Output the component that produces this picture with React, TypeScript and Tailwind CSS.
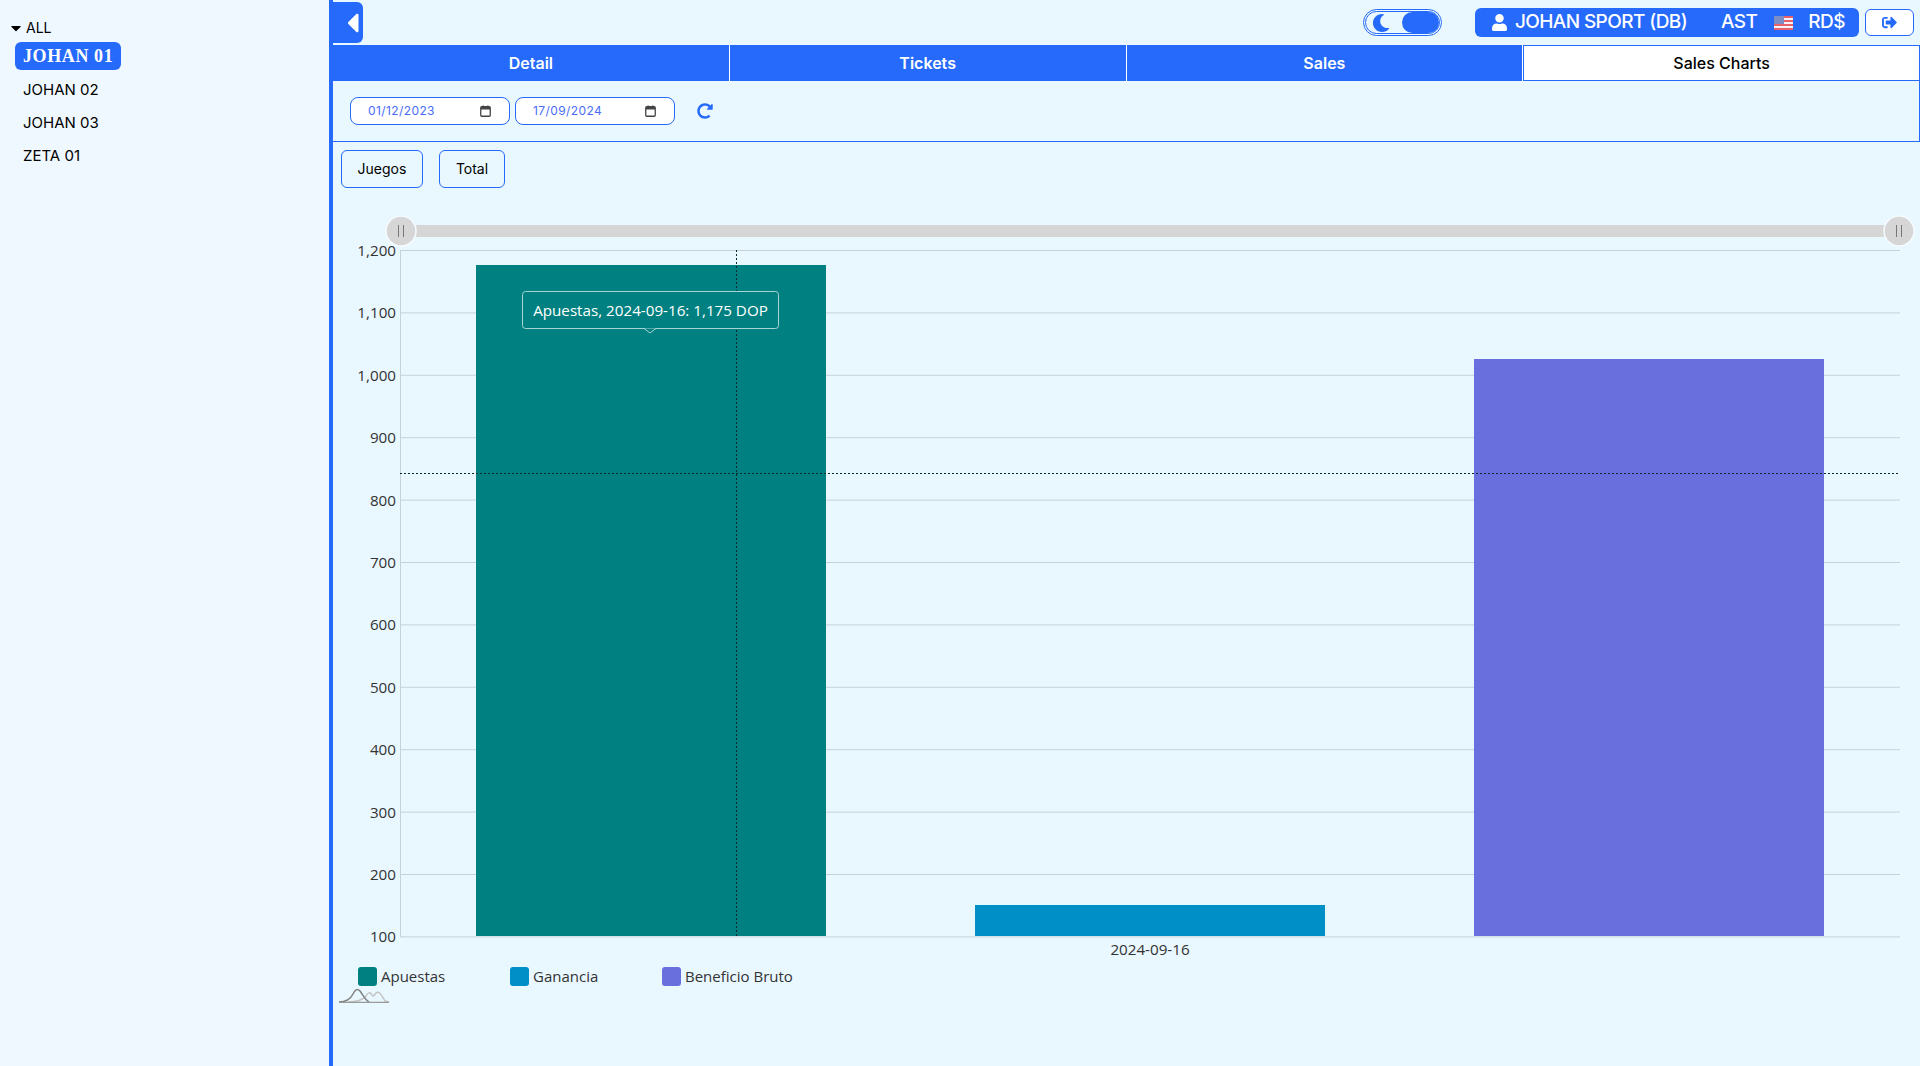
import { FaCaretDown, FaCaretLeft, FaMoon, FaRedoAlt, FaSignOutAlt, FaUser } from 'react-icons/fa';

const tabs = ['Detail', 'Tickets', 'Sales'];
const yTicks = [1200, 1100, 1000, 900, 800, 700, 600, 500, 400, 300, 200, 100];
const branches = ['JOHAN 02', 'JOHAN 03', 'ZETA 01'];
const bars = [
  { x: 476, y: 265, h: 671, color: '#008080' },
  { x: 975, y: 905, h: 31, color: '#008fc7' },
  { x: 1474, y: 359, h: 577, color: '#6970dd' },
];
const legend = [
  { name: 'Apuestas', color: 'bg-[#008080]', width: 'w-[152px]' },
  { name: 'Ganancia', color: 'bg-[#008fc7]', width: 'w-[152px]' },
  { name: 'Beneficio Bruto', color: 'bg-[#6970dd]', width: 'w-[160px]' },
];

const tickY = (i: number) => 250.5 + i * 62.4;

const CalendarIcon = () => (
  <svg width="11" height="12" viewBox="0 0 11 12" className="shrink-0">
    <rect x="0.75" y="1.75" width="9.5" height="9.5" rx="1" fill="none" stroke="#444" strokeWidth="1.3" />
    <rect x="1" y="2" width="9" height="2.5" fill="#444" />
    <rect x="2.5" y="0.5" width="1.3" height="2" fill="#444" />
    <rect x="7.2" y="0.5" width="1.3" height="2" fill="#444" />
  </svg>
);

const DateField = ({ value }: { value: string }) => (
  <div className="flex items-center justify-between w-[160px] h-[28px] pl-[17px] pr-[18px] bg-white border border-[#266afb] rounded-lg">
    <span className="text-[12px] tracking-[0.4px] text-[#4a6cf7]">{value}</span>
    <CalendarIcon />
  </div>
);

const FlagUS = () => (
  <svg width="19" height="14" viewBox="0 0 19 14" className="shrink-0">
    <rect width="19" height="14" fill="#f4f4f8" />
    <rect y="0" width="19" height="2" fill="#e8606a" />
    <rect y="4" width="19" height="2" fill="#e8606a" />
    <rect y="8" width="19" height="2" fill="#e8606a" />
    <rect y="12" width="19" height="2" fill="#e8606a" />
    <rect width="10" height="8" fill="#7c8cc4" />
  </svg>
);

const Handle = ({ cx }: { cx: number }) => (
  <g>
    <circle cx={cx} cy={231} r={15} fill="#d6d6d6" stroke="#f5fbff" strokeWidth={1.5} />
    <line x1={cx - 2.5} x2={cx - 2.5} y1={225} y2={237} stroke="#777" />
    <line x1={cx + 2.5} x2={cx + 2.5} y1={225} y2={237} stroke="#777" />
  </g>
);

export default function App() {
  return (
    <div className="flex h-screen overflow-hidden bg-[#e9f7ff] font-['Inter',sans-serif] text-black">
      {/* Sidebar */}
      <aside className="w-[333px] shrink-0 h-full bg-[#f0f8ff] border-r-4 border-[#266afb] pt-[19px] pl-[8px]">
        <div className="flex items-center gap-[2px] h-[18px] text-[14px] leading-none">
          <FaCaretDown size={16} />
          <span>ALL</span>
        </div>
        <div className="ml-[7px] mt-[5px] flex flex-col items-start">
          <span className="h-[28px] w-[106px] mb-[4px] pl-[8px] flex items-center rounded-md bg-[#266afb] text-white font-bold text-[18px] font-['Liberation_Serif',serif] tracking-[0.6px]">
            JOHAN 01
          </span>
          {branches.map(name => (
            <span key={name} className="h-[33px] pl-[8px] flex items-center text-[15px]">
              {name}
            </span>
          ))}
        </div>
      </aside>

      <main className="flex-1 min-w-0 flex flex-col">
        {/* Top bar */}
        <div className="h-[45px] flex items-start justify-between">
          <button className="w-[30px] h-[41px] mt-[2px] pl-[9px] flex items-center justify-center bg-[#266afb] rounded-r-md text-white">
            <FaCaretLeft size={32} />
          </button>
          <div className="flex items-center gap-[6px] mt-[8px] mr-[6px]">
            <div className="flex items-center justify-between w-[79px] h-[27px] mr-[27px] pl-[6px] pr-[0px] border-[3px] border-double border-[#266afb] rounded-full">
              <FaMoon size={18} className="text-[#266afb]" />
              <span className="w-[37px] h-[21px] rounded-full bg-[#266afb]" />
            </div>
            <div className="flex items-center w-[384px] h-[29px] pl-[16px] bg-[#266afb] rounded-md text-white text-[19px] font-medium tracking-[-0.6px]">
              <FaUser size={17} />
              <span className="ml-[7px]">JOHAN SPORT (DB)</span>
              <span className="ml-[34px]">AST</span>
              <span className="ml-[17px]"><FlagUS /></span>
              <span className="ml-[15px]">RD$</span>
            </div>
            <button className="w-[49px] h-[27px] flex items-center justify-center bg-white border border-[#266afb] rounded-md text-[#266afb]">
              <FaSignOutAlt size={15} />
            </button>
          </div>
        </div>

        {/* Tabs */}
        <div className="grid grid-cols-4 h-[36px] bg-[#266afb] text-[16px]">
          {tabs.map(tab => (
            <div key={tab} className="flex items-center justify-center font-semibold text-white border-r border-white last:border-0">
              {tab}
            </div>
          ))}
          <div className="flex items-center justify-center bg-white border border-[#266afb] font-medium">Sales Charts</div>
        </div>

        {/* Filters */}
        <div className="h-[61px] flex items-center gap-[5px] pl-[18px] border-b border-r border-[#266afb] ml-[-1px]">
          <DateField value="01/12/2023" />
          <DateField value="17/09/2024" />
          <FaRedoAlt size={16} className="ml-[17px] text-[#266afb]" />
        </div>

        <div className="flex gap-[16px] pl-[8px] pt-[8px] h-[58px]">
          <button className="w-[82px] h-[38px] bg-transparent border border-[#266afb] rounded-md text-[14px] pb-[1px]">Juegos</button>
          <button className="w-[66px] h-[38px] bg-transparent border border-[#266afb] rounded-md text-[14px] pb-[1px]">Total</button>
        </div>

        {/* Chart */}
        <svg viewBox="333 200 1587 761" width="1587" height="761" className="block font-['Open_Sans',sans-serif] text-[15.2px]">
          <rect x={401} y={225} width={1498} height={12} fill="#d6d6d6" />
          <Handle cx={401} />
          <Handle cx={1899} />
          {yTicks.map((t, i) => (
            <g key={t}>
              <line x1={400} x2={1900} y1={tickY(i)} y2={tickY(i)} stroke="#c5d2dc" />
              <text x={396} y={tickY(i) + 5.5} textAnchor="end" fill="#333">
                {t.toLocaleString('en-US')}
              </text>
            </g>
          ))}
          <line x1={400.5} x2={400.5} y1={250} y2={937} stroke="#c5d2dc" />
          {bars.map(b => (
            <rect key={b.x} x={b.x} y={b.y} width={350} height={b.h} fill={b.color} />
          ))}
          <line x1={736.5} x2={736.5} y1={250} y2={936} stroke="#0b2a2a" strokeDasharray="2 2" />
          <line x1={400} x2={1900} y1={473.5} y2={473.5} stroke="#0b2a2a" strokeDasharray="2 2" />
          <text x={1150} y={954.5} textAnchor="middle" fill="#333">2024-09-16</text>
          {/* Tooltip */}
          <g>
            <rect x={522.5} y={291.5} width={256} height={37} rx={3} fill="#008080" stroke="#a8d4d4" />
            <path d="M644 328.5 L650 333 L656 328.5" fill="#008080" stroke="#a8d4d4" />
            <text x={650.5} y={316} textAnchor="middle" fill="#fff">Apuestas, 2024-09-16: 1,175 DOP</text>
          </g>
        </svg>

        {/* Legend */}
        <div className="flex pl-[25px] pt-[5px] font-['Open_Sans',sans-serif] text-[15px] text-[#333]">
          {legend.map(l => (
            <div key={l.name} className={`flex items-center gap-[4px] h-[20px] ${l.width}`}>
              <span className={`w-[19px] h-[19px] rounded-[3px] ${l.color}`} />
              <span>{l.name}</span>
            </div>
          ))}
        </div>
        <svg width="52" height="15" viewBox="0 0 52 15" className="ml-[5px] mt-[2px]">
          <path d="M10 14 C18 14 24 13 28 8 C30 4 32 4 34 7 C35 9 36 8 38 5 C41 2 44 8 47 13 L51 14" fill="none" stroke="#c4c4c4" strokeWidth="1.5" />
          <path d="M1 14 C8 14 12 12 15 6 C17 2 19 0 22 3 C25 7 27 12 31 14" fill="none" stroke="#808080" strokeWidth="1.5" />
          <path d="M1 14.3 H51" stroke="#9a9a9a" strokeWidth="1.2" />
        </svg>
      </main>
    </div>
  );
}
